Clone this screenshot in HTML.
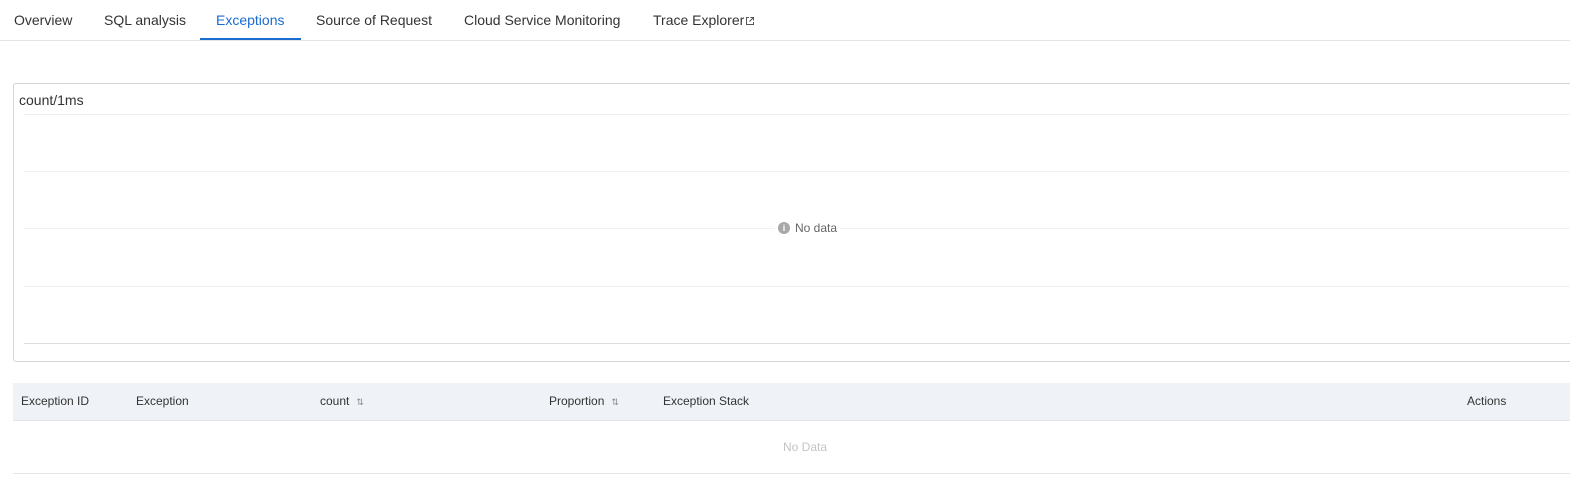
<!DOCTYPE html>
<html><head><meta charset="utf-8"><style>
*{margin:0;padding:0;box-sizing:border-box}
body{width:1570px;height:483px;overflow:hidden;background:#fff;font-family:"Liberation Sans",Arial,sans-serif;color:#333;position:relative}
.tabs{position:absolute;left:0;top:0;width:1570px;height:41px;border-bottom:1px solid #e3e3e3}
.tab{position:absolute;top:12px;font-size:14px;color:#333;white-space:nowrap}
.tab.active{color:#1c6cd0}
.ul{position:absolute;left:200px;top:38px;width:101px;height:2px;background:#1c6cd0}
.chart{position:absolute;left:13px;top:83px;width:1600px;height:279px;border:1px solid #d6d6d6;border-radius:3px}
.ytitle{position:absolute;left:5px;top:8px;font-size:14px;color:#333}
.gl{position:absolute;left:10px;width:1600px;height:1px;background:#f0f0f0}
.nodata{position:absolute;left:761px;top:137px;font-size:12px;color:#666;background:#fff;padding:0 3px;display:flex;align-items:center;gap:5px}
.dot{width:12px;height:12px;border-radius:50%;background:#a8a8a8;color:#fff;font-size:9px;line-height:12px;text-align:center;font-weight:bold}
.thead{position:absolute;left:13px;top:383px;width:1570px;height:38px;background:#eff2f6;border-bottom:1px solid #e3e6ea}
.th{position:absolute;top:11px;font-size:12px;color:#333;white-space:nowrap}
.sort{font-size:9px;color:#888;margin-left:7px}
.row{position:absolute;left:13px;top:421px;width:1570px;height:53px;border-bottom:1px solid #e3e6ea}
.nd{position:absolute;left:770px;top:19px;font-size:12px;color:#c4c4c4}
</style></head><body>
<div class="tabs">
<span class="tab" style="left:14px">Overview</span>
<span class="tab" style="left:104px">SQL analysis</span>
<span class="tab active" style="left:216px">Exceptions</span>
<span class="tab" style="left:316px">Source of Request</span>
<span class="tab" style="left:464px">Cloud Service Monitoring</span>
<span class="tab" style="left:653px">Trace Explorer<svg width="10" height="10" viewBox="0 0 10 10" style="margin-left:1px;vertical-align:-1px"><path d="M4 1.5H1.5v7h7V6M5.5 1.5h3v3M8.5 1.5L4.5 5.5" fill="none" stroke="#555" stroke-width="1"/></svg></span>
<div class="ul"></div>
</div>
<div class="chart">
<div class="ytitle">count/1ms</div>
<div class="gl" style="top:30px"></div>
<div class="gl" style="top:87px"></div>
<div class="gl" style="top:144px"></div>
<div class="gl" style="top:202px"></div>
<div class="gl" style="top:259px;background:#ddd"></div>
<div class="nodata"><span class="dot">i</span>No data</div>
</div>
<div class="thead">
<span class="th" style="left:8px">Exception ID</span>
<span class="th" style="left:123px">Exception</span>
<span class="th" style="left:307px">count<span class="sort">⇅</span></span>
<span class="th" style="left:536px">Proportion<span class="sort">⇅</span></span>
<span class="th" style="left:650px">Exception Stack</span>
<span class="th" style="left:1454px">Actions</span>
</div>
<div class="row"><span class="nd">No Data</span></div>
</body></html>
